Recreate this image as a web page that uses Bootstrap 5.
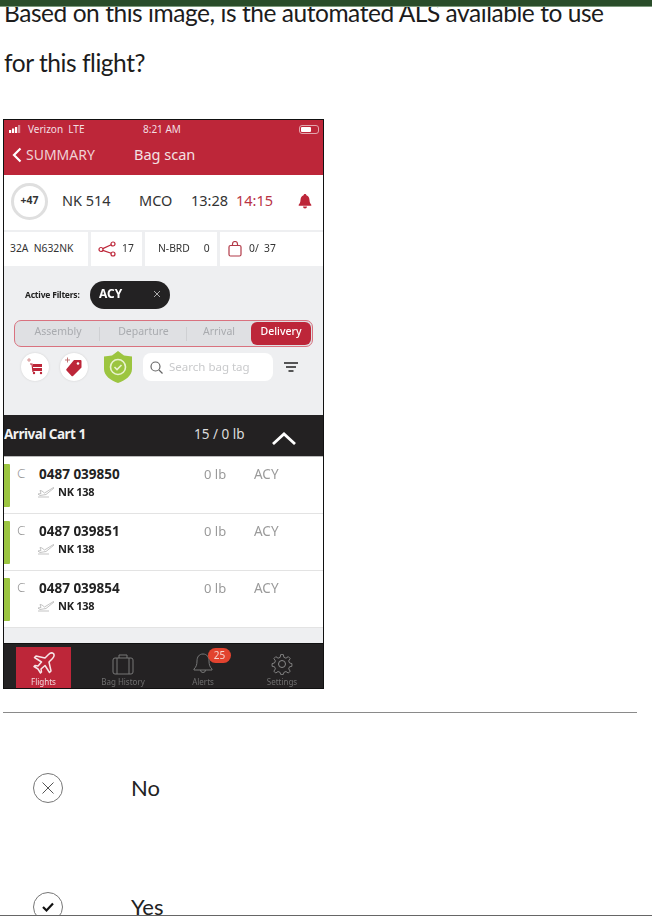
<!DOCTYPE html>
<html lang="en">
<head>
<meta charset="UTF-8">
<meta name="viewport" content="width=device-width, initial-scale=1.0">
<title>Question</title>
<link href="https://cdn.jsdelivr.net/npm/bootstrap@5.3.0/dist/css/bootstrap.min.css" rel="stylesheet">
<style>
html, body { height: 916px; overflow: hidden; background: #fff; }
body { font-family: "Lato", sans-serif; color: #1c1c1c; }
.top-strip { height: 7px; background: #2a4d2a; border-bottom: 1px solid #7d9a7d; position: relative; z-index: 2; }
.question { margin: -19px 40px 0 4px; font-size: 24.5px; line-height: 50px; letter-spacing: -.45px; position: relative; z-index: 1; }
.phone { width: 321px; height: 570px; margin: 31px 0 23px 3px; border: 1px solid #111; background: #eeeff1; font-family: "Noto Sans", sans-serif; display: flex; flex-direction: column; overflow: hidden; }
.phone-inner { filter: blur(.4px); display: flex; flex-direction: column; height: 100%; }
.red-head { height: 55px; background: #bd2639; color: #f3dfe2; flex: none; }
.status-line { height: 17px; font-size: 10px; padding: 1px 4px 0 5px; }
.carrier { width: 134px; }
.bars { width: 15px; height: 8px; }
.battery { width: 20px; height: 9px; margin-left: auto; border: 1px solid #e3a5ad; border-radius: 3px; padding: 1px; }
.battery i { display: block; width: 10px; height: 100%; background: #fff; border-radius: 1px; }
.nav-line { font-size: 14px; padding: 7px 0 0 8px; }
.nav-back { width: 122px; color: #f0d2d6; }
.nav-title { font-size: 14.5px; color: #f4e1e4; }
.flight-row { height: 55px; background: #fff; flex: none; font-size: 14.5px; color: #333; padding-bottom: 3px; }
.delay-ring { width: 37px; height: 37px; margin: 0 14px 0 7px; border: 3px solid #dfdfdf; border-radius: 50%; font-size: 10.5px; font-weight: 700; }
.fl-no { width: 77px; }
.fl-dest { width: 52px; }
.fl-sched { width: 45px; }
.fl-late { color: #b93344; width: 62px; }
.info-row { height: 34px; margin-top: 2px; flex: none; gap: 3px; font-size: 10.3px; color: #333; }
.info-row > div { background: #fff; height: 100%; }
.info-a { width: 84px; padding-left: 6px; }
.info-b { width: 51px; padding-left: 7px; gap: 6px; }
.info-c { width: 72px; padding-left: 13px; gap: 14px; }
.info-d { flex: 1; padding-left: 8px; gap: 7px; }
.grey-part { height: 149px; flex: none; background: #eeeff1; padding: 15px 10px 0 10px; }
.filter-line { height: 28px; padding-left: 11px; }
.filter-label { font-size: 8.5px; font-weight: 700; width: 65px; color: #222; letter-spacing: -.2px; }
.filter-pill { width: 80px; height: 28px; border-radius: 14px; background: #232223; color: #fff; font-size: 12px; font-weight: 700; padding: 0 9px 2px; }
.segments { height: 27px; margin-top: 11px; border: 1px solid #d9727f; border-radius: 7px; background: #dfe0e3; font-size: 10.5px; color: #a9abaf; padding: 1px; }
.seg { height: 100%; padding-bottom: 3px; }
.seg-a { width: 84px; }
.seg-b { width: 87px; }
.seg-c { width: 64px; }
.seg-sep { width: 1px; height: 14px; background: #cfd0d3; flex: none; margin-left: -1px; }
.seg-on { flex: 1; background: #bd2639; color: #fff; border-radius: 6px; font-weight: 500; }
.tool-line { height: 32px; margin-top: 4px; padding-left: 7px; }
.round-btn { width: 28px; height: 28px; background: #fff; border-radius: 50%; box-shadow: 0 0 2px #ccc; }
.gap-one { margin-right: 11px; }
.gap-two { margin-right: 15px; }
.shield-ic { width: 30px; height: 32px; margin-right: 10px; }
.search-box { width: 130px; height: 28px; background: #fff; border-radius: 8px; padding-left: 6px; gap: 5px; font-size: 11.5px; color: #c9cacc; }
.menu-ic { margin-left: 11px; width: 14px; height: 10px; }
.cart-head { height: 42px; flex: none; background: #232122; color: #f1f1f1; border-bottom: 1px solid #bbb; padding-bottom: 3px; }
.cart-name { width: 190px; font-size: 13.5px; font-weight: 700; letter-spacing: -.5px; }
.cart-count { width: 77px; font-size: 13.5px; color: #ddd; }
.cart-chev { margin-top: 7px; }
.bag-row { height: 57px; flex: none; background: #fff; border-bottom: 1px solid #e3e3e3; padding-left: 0; }
.bag-flag { width: 6px; height: 43px; background: #9cc540; margin: 7px 7px 0 0; border-radius: 0 1px 1px 0; }
.bag-c { width: 22px; font-size: 13.5px; color: #999; padding-top: 6px; font-weight: 300; }
.bag-main { width: 165px; padding-top: 8px; }
.bag-tag { font-size: 13.5px; font-weight: 700; line-height: 18px; color: #222; }
.bag-fl { font-size: 11px; font-weight: 700; line-height: 18px; color: #222; letter-spacing: -.3px; margin-left: -3px; gap: 2px; }
.bag-lb { width: 50px; font-size: 13px; color: #9a9a9a; padding-top: 8px; }
.bag-st { font-size: 13.5px; color: #9a9a9a; padding-top: 7px; }
.spacer-grey { flex: 1; background: #eeeff1; }
.tab-bar { height: 45px; flex: none; background: #242223; border-top: 1px solid #111; font-size: 8px; color: #6f6f6f; padding-left: 12px; align-items: flex-end; }
.tab-item { height: 41px; gap: 1px; flex: none; }
.tab-flights { width: 55px; background: #bd2639; color: #f1d8db; }
.tab-history { width: 104px; }
.tab-alerts { width: 56px; margin-right: 10px; }
.tab-settings { width: 82px; }
.tab-badge { position: absolute; top: 1px; left: 50%; margin-left: 5px; width: 23px; height: 15px; border-radius: 8px; background: #e2432f; color: #f6d6d0; font-size: 10px; line-height: 15px; text-align: center; }
.rule-line { width: 634px; height: 1px; margin: 0 0 15px 3px; background: #8a8a8a; }
.answers { height: 188px; overflow: hidden; }
.answer { height: 119px; padding-left: 33px; font-size: 22px; color: #222; }
.answer-ring { width: 30px; height: 30px; margin-right: 68px; border: 1px solid #777; border-radius: 50%; background: #fff; }
.bottom-rule { position: fixed; left: 0; right: 0; top: 915px; height: 1px; background: #666; z-index: 3; }
</style>
</head>
<body>
<div class="top-strip"></div>
<div class="question">Based on this image, is the automated ALS available to use for this flight?</div>

<div class="phone">
<div class="phone-inner">
  <div class="red-head">
    <div class="status-line d-flex align-items-center">
      <div class="carrier d-flex align-items-center gap-1">
        <svg class="bars" viewBox="0 0 15 8"><rect x="0" y="5" width="2.2" height="3" fill="#fff"/><rect x="3" y="3.5" width="2.2" height="4.5" fill="#fff"/><rect x="6" y="2" width="2.2" height="6" fill="#fff"/><rect x="9" y="0" width="2.2" height="8" fill="#d98b96"/></svg>
        <span>Verizon &nbsp;LTE</span>
      </div>
      <span>8:21 AM</span>
      <div class="battery"><i></i></div>
    </div>
    <div class="nav-line d-flex align-items-center">
      <div class="nav-back d-flex align-items-center gap-1">
        <svg width="10" height="16" viewBox="0 0 10 16"><path d="M8.5 1.5 2 8l6.5 6.5" fill="none" stroke="#fff" stroke-width="2.2"/></svg>
        <span>SUMMARY</span>
      </div>
      <span class="nav-title">Bag scan</span>
    </div>
  </div>

  <div class="flight-row d-flex align-items-center">
    <div class="delay-ring d-flex align-items-center justify-content-center">+47</div>
    <div class="fl-no">NK 514</div>
    <div class="fl-dest">MCO</div>
    <div class="fl-sched">13:28</div>
    <div class="fl-late">14:15</div>
    <svg width="14" height="16" viewBox="0 0 14 16"><path d="M7 1c.8 0 1.3.5 1.4 1.2C10.500 3 11.400 4.800 11.500 7c.1 2.300.7 3.500 1.800 4.800v.9H.7v-.9C1.800 10.500 2.400 9.300 2.500 7 2.600 4.800 3.500 3 5.600 2.200 5.700 1.500 6.200 1 7 1z" fill="#bd2639"/><path d="M5 13.500h4a2 2 0 0 1-4 0z" fill="#bd2639"/></svg>
  </div>

  <div class="info-row d-flex">
    <div class="info-a d-flex align-items-center">32A&nbsp; N632NK</div>
    <div class="info-b d-flex align-items-center">
      <svg width="18" height="16" viewBox="0 0 18 16"><g fill="none" stroke="#bd2639" stroke-width="1.2"><circle cx="3" cy="8.500" r="2"/><circle cx="15" cy="3" r="2"/><circle cx="15" cy="13" r="2"/><path d="M4.800 7.600 13.200 3.800M4.800 9.400l8.400 2.800"/></g></svg>
      <span>17</span>
    </div>
    <div class="info-c d-flex align-items-center"><span>N-BRD</span><span>0</span></div>
    <div class="info-d d-flex align-items-center">
      <svg width="14" height="16" viewBox="0 0 14 16"><g fill="none" stroke="#b23a48" stroke-width="1.200"><rect x="1" y="4.500" width="12" height="10.500" rx="1.500"/><path d="M4.500 4.500V3a2.500 2.500 0 0 1 5 0v1.500"/></g></svg>
      <span>0/&nbsp; 37</span>
    </div>
  </div>

  <div class="grey-part">
    <div class="filter-line d-flex align-items-center">
      <div class="filter-label">Active Filters:</div>
      <div class="filter-pill d-flex align-items-center justify-content-between">
        <span>ACY</span>
        <svg width="8" height="8" viewBox="0 0 8 8"><path d="M1 1l6 6M7 1 1 7" stroke="#aaa" stroke-width="1"/></svg>
      </div>
    </div>
    <div class="segments d-flex align-items-center text-center">
      <div class="seg seg-a d-flex align-items-center justify-content-center">Assembly</div>
      <div class="seg-sep"></div>
      <div class="seg seg-b d-flex align-items-center justify-content-center">Departure</div>
      <div class="seg-sep"></div>
      <div class="seg seg-c d-flex align-items-center justify-content-center">Arrival</div>
      <div class="seg seg-on d-flex align-items-center justify-content-center">Delivery</div>
    </div>
    <div class="tool-line d-flex align-items-center">
      <div class="round-btn gap-one d-flex align-items-center justify-content-center">
        <svg width="20" height="20" viewBox="0 0 20 20"><path d="M2 3h4M4 1v4" stroke="#c77" stroke-width=".8"/><path d="M5 7h2l1 8" fill="none" stroke="#bd2639" stroke-width="1.200"/><rect x="8" y="7" width="9" height="3" fill="#bd2639"/><rect x="8" y="11" width="9" height="3" fill="#bd2639"/><circle cx="9" cy="16" r="1.200" fill="#bd2639"/><circle cx="16" cy="16" r="1.200" fill="#bd2639"/></svg>
      </div>
      <div class="round-btn gap-two d-flex align-items-center justify-content-center">
        <svg width="22" height="22" viewBox="0 0 22 22"><path d="M2 4h5M4.500 1.500v5" stroke="#b66" stroke-width=".9"/><path d="M11 4h6.500a1 1 0 0 1 1 1v6.500L10 20a1 1 0 0 1-1.400 0L3.500 14.500a1 1 0 0 1 0-1.400z" fill="#bd2639"/><circle cx="15" cy="7.500" r="1.300" fill="#fff"/></svg>
      </div>
      <svg class="shield-ic" viewBox="0 0 30 32"><path d="M15 0 21 4.500 29 5.500V18C29 25 22 29.500 15 32 8 29.500 1 25 1 18V5.500L9 4.500z" fill="#9cc540"/><circle cx="15" cy="16" r="7.500" fill="none" stroke="#e9f3d0" stroke-width="1.600"/><path d="M11.500 16l2.500 2.500 4.500-4.500" fill="none" stroke="#e9f3d0" stroke-width="1.600"/></svg>
      <div class="search-box d-flex align-items-center">
        <svg width="15" height="15" viewBox="0 0 15 15"><circle cx="6.500" cy="6.500" r="4.500" fill="none" stroke="#666" stroke-width="1.200"/><path d="M10 10l3.500 3.500" stroke="#666" stroke-width="1.200"/></svg>
        <span>Search bag tag</span>
      </div>
      <svg class="menu-ic" viewBox="0 0 14 10"><path d="M0 1h14M2 5h10M4.500 9h5" stroke="#222" stroke-width="1.300"/></svg>
    </div>
  </div>

  <div class="cart-head d-flex align-items-center">
    <div class="cart-name">Arrival Cart 1</div>
    <div class="cart-count">15 / 0 lb</div>
    <svg class="cart-chev" width="26" height="14" viewBox="0 0 26 14"><path d="M2 13 13 3l11 10" fill="none" stroke="#fff" stroke-width="2.800"/></svg>
  </div>

  <div class="bag-row d-flex">
    <div class="bag-flag"></div><div class="bag-c">C</div>
    <div class="bag-main">
      <div class="bag-tag">0487 039850</div>
      <div class="bag-fl d-flex align-items-center"><svg width="20" height="12" viewBox="0 0 18 12"><path d="M1 8 4 7.500 3 4.500 5 5l2.500 2L16.500 1.500 17 2 9 8.500 3 9.500zM1 11h11" fill="none" stroke="#aaa" stroke-width=".7"/></svg>NK 138</div>
    </div>
    <div class="bag-lb">0 lb</div><div class="bag-st">ACY</div>
  </div>
  <div class="bag-row d-flex">
    <div class="bag-flag"></div><div class="bag-c">C</div>
    <div class="bag-main">
      <div class="bag-tag">0487 039851</div>
      <div class="bag-fl d-flex align-items-center"><svg width="20" height="12" viewBox="0 0 18 12"><path d="M1 8 4 7.500 3 4.500 5 5l2.500 2L16.500 1.500 17 2 9 8.500 3 9.500zM1 11h11" fill="none" stroke="#aaa" stroke-width=".7"/></svg>NK 138</div>
    </div>
    <div class="bag-lb">0 lb</div><div class="bag-st">ACY</div>
  </div>
  <div class="bag-row d-flex">
    <div class="bag-flag"></div><div class="bag-c">C</div>
    <div class="bag-main">
      <div class="bag-tag">0487 039854</div>
      <div class="bag-fl d-flex align-items-center"><svg width="20" height="12" viewBox="0 0 18 12"><path d="M1 8 4 7.500 3 4.500 5 5l2.500 2L16.500 1.500 17 2 9 8.500 3 9.500zM1 11h11" fill="none" stroke="#aaa" stroke-width=".7"/></svg>NK 138</div>
    </div>
    <div class="bag-lb">0 lb</div><div class="bag-st">ACY</div>
  </div>

  <div class="spacer-grey"></div>

  <div class="tab-bar d-flex">
    <div class="tab-item tab-flights d-flex flex-column align-items-center justify-content-end">
      <svg width="24" height="24" viewBox="0 0 24 24"><path d="M21.500 2.500c-1.500-1-3.500-.5-5 1L13 7 4 5 2.500 6.500 9.500 11 6 15 3 14.500 2 15.500l4 2.500 2.500 4 1-1L9 18l4-3.500 4.500 7L19 20l-2-9 3.500-3.500c1.500-1.500 2-3.500 1-5z" fill="none" stroke="#f6e5e7" stroke-width="1.500" stroke-linejoin="round"/></svg>
      <span>Flights</span>
    </div>
    <div class="tab-item tab-history d-flex flex-column align-items-center justify-content-end">
      <svg width="22" height="22" viewBox="0 0 22 22"><g fill="none" stroke="#777" stroke-width="1"><rect x="1" y="5" width="20" height="16" rx="2"/><path d="M7 5V2h8v3M5 5v16M17 5v16"/></g></svg>
      <span>Bag History</span>
    </div>
    <div class="tab-item tab-alerts position-relative d-flex flex-column align-items-center justify-content-end">
      <svg width="20" height="23" viewBox="0 0 20 23"><path d="M10 2c-4 0-6 3-6 7 0 4-1 6-3 8v1h18v-1c-2-2-3-4-3-8 0-4-2-7-6-7zM7.500 18a2.500 2.500 0 0 0 5 0" fill="none" stroke="#777" stroke-width="1"/></svg>
      <span>Alerts</span>
      <div class="tab-badge">25</div>
    </div>
    <div class="tab-item tab-settings d-flex flex-column align-items-center justify-content-end">
      <svg width="22" height="22" viewBox="0 0 22 22"><g fill="none" stroke="#8a8a8a" stroke-width="1"><circle cx="11" cy="11" r="3.500"/><path d="M9.500 1h3l.6 3 2.300 1 2.600-1.700 2.100 2.100L18.400 8l1 2.300 2.600.7v3l-2.600.5-1 2.300 1.700 2.600-2.100 2.100-2.600-1.700-2.300 1-.6 2.200h-3l-.6-2.200-2.300-1-2.600 1.700L2 19.400l1.700-2.600-1-2.300L0 14v-3l2.700-.7 1-2.300L2 5.400l2.100-2.100L6.700 5 9 4z" transform="translate(1.100 .7) scale(.9)"/></g></svg>
      <span>Settings</span>
    </div>
  </div>
</div>
</div>

<div class="rule-line"></div>
<div class="answers">
  <div class="answer d-flex align-items-center">
    <div class="answer-ring d-flex align-items-center justify-content-center">
      <svg width="14" height="14" viewBox="0 0 14 14"><path d="M1.500 1.500l11 11M12.500 1.500l-11 11" stroke="#555" stroke-width="1"/></svg>
    </div>
    <span>No</span>
  </div>
  <div class="answer d-flex align-items-center">
    <div class="answer-ring d-flex align-items-center justify-content-center">
      <svg width="14" height="12" viewBox="0 0 14 12"><path d="M2 6l3.500 3.500L12 2.500" fill="none" stroke="#111" stroke-width="2.200"/></svg>
    </div>
    <span>Yes</span>
  </div>
</div>
<div class="bottom-rule"></div>
</body>
</html>
